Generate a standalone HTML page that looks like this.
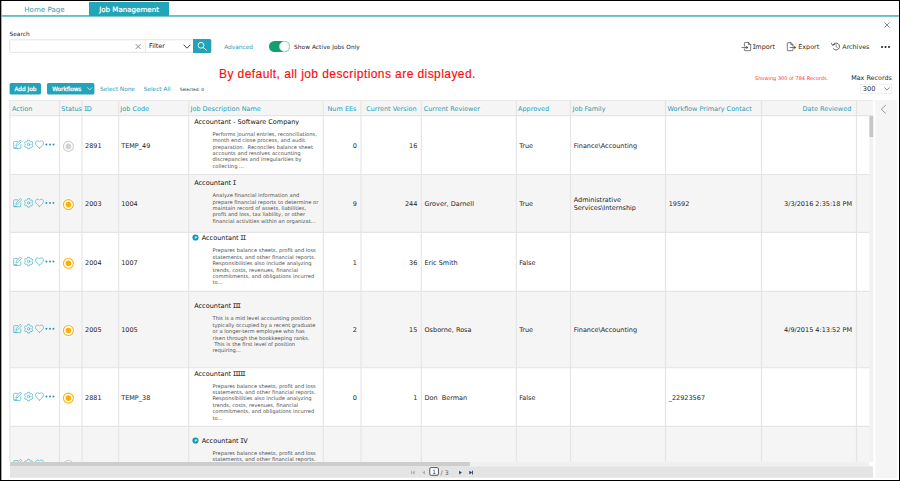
<!DOCTYPE html>
<html lang="en">
<head>
<meta charset="utf-8">
<title>Job Management</title>
<style>
*{box-sizing:border-box;margin:0;padding:0}
html,body{width:900px;height:481px;overflow:hidden;background:#fff}
body{position:relative;font-family:"DejaVu Sans","Liberation Sans",sans-serif;font-size:7.09px;color:#222;line-height:1}
.abs{position:absolute}
.t{position:absolute;white-space:nowrap;line-height:10px;height:10px}
.teal,.c.teal{color:#2a9db3}
.s{font-size:5.82px}
/* frame */
#frame{position:absolute;left:0;top:0;width:900px;height:481px;border:1px solid #000;border-left-width:1.3px;pointer-events:none;z-index:50}
#leftline{position:absolute;left:1px;top:1px;width:1px;height:479px;background:#78bcc8;z-index:40}
/* tabs */
#tabline{position:absolute;left:1px;top:15px;width:898px;height:2px;background:linear-gradient(#62bfcc 0,#62bfcc 50%,#78c8d3 50%,#78c8d3 100%)}
#tabact{position:absolute;left:89px;top:2px;width:80px;height:14px;background:#23a5b9}
/* table */
#grid{position:absolute;left:9px;top:100px;width:864px;height:362px;overflow:hidden;background:#fff}
.c{position:absolute;white-space:nowrap;line-height:10px;height:10px;color:#262626;font-size:6.5px}
.c.teal{color:#2a9db3}
.d{position:absolute;left:203.5px;font-size:5.18px;line-height:6px;height:6px;color:#505050;white-space:nowrap}
.i{font-family:'DejaVu Sans Mono','Liberation Mono',monospace;letter-spacing:-0.235em;margin-left:-0.1em;margin-right:0.12em}
.n{position:absolute;left:183px;white-space:nowrap;line-height:10px;color:#111;font-size:6.5px}
</style>
</head>
<body>
<!-- tabs -->
<div id="tabline"></div>
<div id="tabact"></div>
<div class="t teal" style="left:24.3px;top:4.8px">Home Page</div>
<div class="t" style="left:99.2px;top:4.8px;color:#fff;-webkit-text-stroke:0.2px #fff">Job Management</div>


<!-- search -->
<div class="t s" style="left:9.6px;top:29px;color:#222">Search</div>
<svg class="abs" style="left:0;top:36px" width="220" height="20" viewBox="0 36 220 20"><rect x="9.8" y="39.8" width="184" height="12.5" rx="1" fill="#fff" stroke="#e3e3e3" stroke-width="1"/><path d="M145.3 40V52" stroke="#e8e8e8" stroke-width="1"/><path d="M193 39H209.8a1.5 1.5 0 0 1 1.5 1.5V51.5a1.5 1.5 0 0 1 -1.5 1.5H193Z" fill="#22a3b7"/></svg>
<svg class="abs" style="left:135px;top:43px" width="7" height="7" viewBox="0 0 7 7"><path d="M0.7 1.1L5.6 6M5.6 1.1L0.7 6" stroke="#666" stroke-width="0.75" fill="none"/></svg>
<div class="t" style="left:149px;top:41px;color:#222;font-size:6.4px">Filter</div>
<svg class="abs" style="left:182.5px;top:43.8px" width="8" height="5" viewBox="0 0 8 5"><path d="M0.6 0.7L4 4.2L7.4 0.7" stroke="#333" stroke-width="0.9" fill="none"/></svg>
<svg class="abs" style="left:196px;top:41px" width="12" height="10" viewBox="0 0 12 10"><circle cx="5" cy="4.3" r="2.9" stroke="#fff" stroke-width="0.9" fill="none"/><path d="M7.1 6.4L10.4 9.2" stroke="#fff" stroke-width="1" stroke-linecap="round"/></svg>
<div class="t s teal" style="left:224.2px;top:41.5px">Advanced</div>
<div class="abs" style="left:269.2px;top:41.2px;width:20.5px;height:11px;border-radius:5.5px;background:#12a06c"></div>
<div class="abs" style="left:279px;top:41.1px;width:11px;height:11px;border-radius:50%;background:#fff;border:0.6px solid #cfcfcf"></div>
<div class="t s" style="left:294.1px;top:41.5px;color:#222;letter-spacing:0.06px">Show Active Jobs Only</div>

<!-- right actions -->
<svg class="abs" style="left:883.6px;top:21.9px" width="6" height="6" viewBox="0 0 6 6"><path d="M0.4 0.4L5.6 5.6M5.6 0.4L0.4 5.6" stroke="#666" stroke-width="0.75" fill="none"/></svg>
<svg class="abs" style="left:741px;top:41px" width="12" height="11" viewBox="0 0 12 11" fill="none" stroke="#444" stroke-width="0.7" stroke-linejoin="round" stroke-linecap="round"><path d="M3.4 5.2V2.1a0.7 0.7 0 0 1 0.7 -0.7H7.6L9.7 3.5V9a0.7 0.7 0 0 1 -0.7 0.7H4.1a0.7 0.7 0 0 1 -0.7 -0.7V7.8"/><path d="M7.5 1.5V3.6H9.6"/><path d="M1 6.5H6.4"/><path d="M5.3 5.2L7.2 6.5L5.3 7.8Z" fill="#444" stroke-width="0.3"/></svg>
<div class="t" style="left:752.8px;top:41.5px;color:#2a2a2a;font-size:6.5px"><span class="i">I</span>mport</div>
<svg class="abs" style="left:786px;top:41px" width="12" height="11" viewBox="0 0 12 11" fill="none" stroke="#444" stroke-width="0.7" stroke-linejoin="round" stroke-linecap="round"><path d="M6.9 7.8V9a0.7 0.7 0 0 1 -0.7 0.7H2a0.7 0.7 0 0 1 -0.7 -0.7V2.4a0.7 0.7 0 0 1 0.7 -0.7H5L6.9 3.6V5.2"/><path d="M4.9 1.8V3.7H6.8"/><path d="M4 6.5H9.2"/><path d="M8.2 5.2L10 6.5L8.2 7.8Z" fill="#444" stroke-width="0.3"/></svg>
<div class="t" style="left:798.3px;top:41.5px;color:#2a2a2a;font-size:6.4px">Export</div>
<svg class="abs" style="left:830px;top:41px" width="12" height="11" viewBox="0 0 12 11" fill="none" stroke="#333" stroke-width="0.75" stroke-linecap="round" stroke-linejoin="round"><path d="M2.9 3.9A3.5 3.5 0 1 1 3.2 7.6"/><path d="M1.3 2.2L2.6 4.3L4.8 3.4" stroke-width="0.7"/><path d="M6.1 3.6V5.6L7.3 6.5" stroke-width="0.6"/></svg>
<div class="t" style="left:842.3px;top:41.5px;color:#2a2a2a;font-size:6.35px">Archives</div>
<div class="abs" style="left:880.5px;top:45.5px;width:2.3px;height:2.3px;border-radius:50%;background:#1a1a1a;box-shadow:3.5px 0 0 #1a1a1a,7px 0 0 #1a1a1a"></div>

<!-- heading -->
<div class="abs" style="left:219px;top:66.8px;font-family:'Liberation Sans',sans-serif;font-size:12px;letter-spacing:0.425px;line-height:14px;color:#fb0d0d;-webkit-text-stroke:0.15px #fb0d0d;white-space:nowrap">By default, all job descriptions are displayed.</div>

<!-- buttons -->
<svg class="abs" style="left:0;top:80px" width="100" height="18" viewBox="0 80 100 18"><rect x="9.6" y="83" width="31.4" height="11.4" rx="1.5" fill="#22a3b7"/><rect x="47" y="83" width="47.4" height="11.4" rx="1.5" fill="#22a3b7"/><path d="M87.2 87.4L89.7 89.9L92.2 87.4" stroke="#fff" stroke-width="0.7" fill="none"/></svg>
<div class="t s" style="left:14.4px;top:83.7px;color:#fff;-webkit-text-stroke:0.25px #fff">Add Job</div>
<div class="t s" style="left:52.3px;top:83.7px;color:#fff;-webkit-text-stroke:0.25px #fff;letter-spacing:-0.08px">Workflows</div>
<div class="t s teal" style="left:100px;top:84px">Select None</div>
<div class="t s teal" style="left:143.7px;top:84px">Select All</div>
<div class="t" style="left:179.7px;top:85px;font-size:4.35px;color:#333">Selected: 0</div>

<!-- records -->
<div class="t" style="left:755px;top:73.2px;font-size:5.03px;color:#f33">Showing 300 of 784 Records.</div>
<div class="t" style="left:851.2px;top:72.7px;color:#2a2a2a;font-size:6.4px">Max Records</div>
<div class="abs" style="left:860.4px;top:83.5px;width:31.2px;height:10.8px;border:1px solid #f0f0f0;background:#fff"></div>
<div class="t" style="left:862.8px;top:83.5px;color:#2a2a2a;font-size:6.7px">300</div>
<svg class="abs" style="left:884px;top:86.5px" width="6" height="4" viewBox="0 0 6 4"><path d="M0.5 0.5L3 3.1L5.5 0.5" stroke="#555" stroke-width="0.7" fill="none"/></svg>

<!-- GRID -->
<div id="grid">
<svg class="abs" style="left:0;top:0" width="864" height="362" viewBox="9 100 864 362"><rect x="9.6" y="100.2" width="863.4" height="15.40" fill="#f5f5f5"/><rect x="9.6" y="174.5" width="863.4" height="57.80" fill="#f5f5f5"/><rect x="9.6" y="291.4" width="863.4" height="76.35" fill="#f5f5f5"/><rect x="9.6" y="426.4" width="863.4" height="77.60" fill="#f5f5f5"/><g stroke="#e5e5e5" stroke-width="1.15" fill="none"><path d="M9.6 100.2H873"/><path d="M9.6 115.6H873"/><path d="M9.6 174.5H873"/><path d="M9.6 232.3H873"/><path d="M9.6 291.4H873"/><path d="M9.6 367.75H873"/><path d="M9.6 426.4H873"/><path d="M59.5 100V462"/><path d="M82 100V462"/><path d="M118.7 100V462"/><path d="M188.7 100V462"/><path d="M323.3 100V462"/><path d="M361 100V462"/><path d="M421.3 100V462"/><path d="M516.3 100V462"/><path d="M570.5 100V462"/><path d="M665.5 100V462"/><path d="M761.5 100V462"/><path d="M856.5 100V462"/><path d="M9.9 100V462" stroke="#e6e6e6"/></g></svg>
<div class="c teal" style="left:3.0px;top:3.6px">Action</div>
<div class="c teal" style="left:52.3px;top:3.6px;width:20.3px;overflow:hidden">Status</div>
<div class="c teal" style="left:75.3px;top:3.6px"><span class="i">I</span>D</div>
<div class="c teal" style="left:111.3px;top:3.6px">Job Code</div>
<div class="c teal" style="left:181.5px;top:3.6px">Job Description Name</div>
<div class="c teal" style="left:318.5px;top:3.6px">Num EEs</div>
<div class="c teal" style="left:357.2px;top:3.6px">Current Version</div>
<div class="c teal" style="left:414.7px;top:3.6px">Current Reviewer</div>
<div class="c teal" style="left:509.0px;top:3.6px">Approved</div>
<div class="c teal" style="left:563.5px;top:3.6px">Job Family</div>
<div class="c teal" style="left:658.5px;top:3.6px">Workflow Primary Contact</div>
<div class="c teal" style="right:21.7px;top:3.6px">Date Reviewed</div>
<div class="c" style="left:76.0px;top:40.6px">2891</div>
<div class="c" style="left:112.2px;top:40.6px">TEMP_49</div>
<div class="n" style="left:185.2px;top:17.0px">Accountant - Software Company</div>
<div class="d" style="top:31px">Performs journal entries, reconciliations,</div>
<div class="d" style="top:37px">month end close process, and audit</div>
<div class="d" style="top:44px">preparation.&nbsp; Reconciles balance sheet</div>
<div class="d" style="top:50px">accounts and resolves accounting</div>
<div class="d" style="top:56px">discrepancies and irregularities by</div>
<div class="d" style="top:63px">collecting ...</div>
<div class="c" style="right:516.0px;top:40.6px">0</div>
<div class="c" style="right:455.7px;top:40.6px">16</div>
<div class="c" style="left:510.2px;top:40.6px">True</div>
<div class="c" style="left:564.7px;top:40.6px">Finance\Accounting</div>
<div class="c" style="left:76.0px;top:99.0px">2003</div>
<div class="c" style="left:112.2px;top:99.0px">1004</div>
<div class="n" style="left:185.2px;top:78.3px">Accountant <span class="i">I</span></div>
<div class="d" style="top:92px">Analyze financial information and</div>
<div class="d" style="top:99px">prepare financial reports to determine or</div>
<div class="d" style="top:105px">maintain record of assets, liabilities,</div>
<div class="d" style="top:111px">profit and loss, tax liability, or other</div>
<div class="d" style="top:118px">financial activities within an organizat...</div>
<div class="c" style="right:516.0px;top:99.0px">9</div>
<div class="c" style="right:455.7px;top:99.0px">244</div>
<div class="c" style="left:415.5px;top:99.0px">Grover, Darnell</div>
<div class="c" style="left:510.2px;top:99.0px">True</div>
<div class="c" style="left:564.7px;top:96.1px;line-height:8px;height:auto">Administrative<br>Services\Internship</div>
<div class="c" style="left:659.7px;top:99.0px">19592</div>
<div class="c" style="right:21.0px;top:99.0px">3/3/2016 2:35:18 PM</div>
<div class="c" style="left:76.0px;top:157.6px">2004</div>
<div class="c" style="left:112.2px;top:157.6px">1007</div>
<div class="n" style="left:192.7px;top:133.3px">Accountant <span class="i">II</span></div>
<div class="d" style="top:147px">Prepares balance sheets, profit and loss</div>
<div class="d" style="top:154px">statements, and other financial reports.</div>
<div class="d" style="top:160px">Responsibilities also include analyzing</div>
<div class="d" style="top:167px">trends, costs, revenues, financial</div>
<div class="d" style="top:173px">commitments, and obligations incurred</div>
<div class="d" style="top:179px">to...</div>
<div class="c" style="right:516.0px;top:157.6px">1</div>
<div class="c" style="right:455.7px;top:157.6px">36</div>
<div class="c" style="left:415.5px;top:157.6px">Eric Smith</div>
<div class="c" style="left:510.2px;top:157.6px">False</div>
<div class="c" style="left:76.0px;top:224.6px">2005</div>
<div class="c" style="left:112.2px;top:224.6px">1005</div>
<div class="n" style="left:185.2px;top:200.5px">Accountant <span class="i">III</span></div>
<div class="d" style="top:215px">This is a mid level accounting position</div>
<div class="d" style="top:222px">typically occupied by a recent graduate</div>
<div class="d" style="top:228px">or a longer-term employee who has</div>
<div class="d" style="top:235px">risen through the bookkeeping ranks.</div>
<div class="d" style="top:241px">&nbsp;This is the first level of position</div>
<div class="d" style="top:247px">requiring...</div>
<div class="c" style="right:516.0px;top:224.6px">2</div>
<div class="c" style="right:455.7px;top:224.6px">15</div>
<div class="c" style="left:415.5px;top:224.6px">Osborne, Rosa</div>
<div class="c" style="left:510.2px;top:224.6px">True</div>
<div class="c" style="left:564.7px;top:224.6px">Finance\Accounting</div>
<div class="c" style="right:21.0px;top:224.6px">4/9/2015 4:13:52 PM</div>
<div class="c" style="left:76.0px;top:293.1px">2881</div>
<div class="c" style="left:112.2px;top:293.1px">TEMP_38</div>
<div class="n" style="left:185.2px;top:268.8px">Accountant <span class="i">IIIII</span></div>
<div class="d" style="top:283px">Prepares balance sheets, profit and loss</div>
<div class="d" style="top:289px">statements, and other financial reports.</div>
<div class="d" style="top:295px">Responsibilities also include analyzing</div>
<div class="d" style="top:302px">trends, costs, revenues, financial</div>
<div class="d" style="top:308px">commitments, and obligations incurred</div>
<div class="d" style="top:315px">to...</div>
<div class="c" style="right:516.0px;top:293.1px">0</div>
<div class="c" style="right:455.7px;top:293.1px">1</div>
<div class="c" style="left:415.5px;top:293.1px">Don&nbsp; Berman</div>
<div class="c" style="left:510.2px;top:293.1px">False</div>
<div class="c" style="left:659.7px;top:293.1px">_22923567</div>
<div class="c" style="left:76.0px;top:361.6px">2882</div>
<div class="c" style="left:112.2px;top:361.6px">TEMP_39</div>
<div class="n" style="left:192.7px;top:336.3px">Accountant <span class="i">I</span>V</div>
<div class="d" style="top:350px">Prepares balance sheets, profit and loss</div>
<div class="d" style="top:356px">statements, and other financial reports.</div>
<div class="d" style="top:362px">Responsibilities also include analyzing</div>
<div class="d" style="top:369px">trends, costs, revenues, financial</div>
<div class="d" style="top:375px">commitments, and obligations incurred</div>
<div class="d" style="top:382px">to...</div>
<svg class="abs" style="left:0;top:0" width="864" height="362" viewBox="9 100 864 362"><g transform="translate(13.2,139.50)" fill="none" stroke="#3fb2c6" stroke-width="0.7" stroke-linecap="round" stroke-linejoin="round">
<path d="M7.6 5.2V8.2a0.7 0.7 0 0 1 -0.7 0.7H1.2a0.7 0.7 0 0 1 -0.7 -0.7V2.6a0.7 0.7 0 0 1 0.7 -0.7H4.4"/>
<path d="M7.4 0.8l1.1 1.1L4.2 6.2l-1.5 0.4l0.4 -1.5z"/><path d="M1 8.4h2.6" stroke-width="0.9"/>
<path d="M16.59 1.69 L16.36 0.70 L14.54 0.70 L14.31 1.69 L13.15 2.36 L12.18 2.06 L11.27 3.64 L12.01 4.33 L12.01 5.67 L11.27 6.36 L12.18 7.94 L13.15 7.64 L14.31 8.31 L14.54 9.30 L16.36 9.30 L16.59 8.31 L17.75 7.64 L18.72 7.94 L19.63 6.36 L18.89 5.67 L18.89 4.33 L19.63 3.64 L18.72 2.06 L17.75 2.36 Z"/>
<circle cx="15.45" cy="5" r="1.25"/>
<path d="M26.3 8.6 C24.6 7.2 22.3 5.6 22.3 3.5 C22.3 2.2 23.3 1.3 24.4 1.3 C25.2 1.3 25.9 1.7 26.3 2.4 C26.7 1.7 27.4 1.3 28.2 1.3 C29.3 1.3 30.3 2.2 30.3 3.5 C30.3 5.6 28 7.2 26.3 8.6 Z"/>
<g fill="#1793aa" stroke="none"><circle cx="33.2" cy="5" r="0.95"/><circle cx="36.8" cy="5" r="0.95"/><circle cx="40.3" cy="5" r="0.95"/></g>
</g><circle cx="68.4" cy="146.4" r="6.3" fill="#fff" opacity="0.7"/><circle cx="68.4" cy="146.4" r="5" fill="#fff" stroke="#cfcfcf" stroke-width="1.1"/><circle cx="68.4" cy="146.4" r="2.8" fill="#d2d2d2"/><g transform="translate(13.2,197.90)" fill="none" stroke="#3fb2c6" stroke-width="0.7" stroke-linecap="round" stroke-linejoin="round">
<path d="M7.6 5.2V8.2a0.7 0.7 0 0 1 -0.7 0.7H1.2a0.7 0.7 0 0 1 -0.7 -0.7V2.6a0.7 0.7 0 0 1 0.7 -0.7H4.4"/>
<path d="M7.4 0.8l1.1 1.1L4.2 6.2l-1.5 0.4l0.4 -1.5z"/><path d="M1 8.4h2.6" stroke-width="0.9"/>
<path d="M16.59 1.69 L16.36 0.70 L14.54 0.70 L14.31 1.69 L13.15 2.36 L12.18 2.06 L11.27 3.64 L12.01 4.33 L12.01 5.67 L11.27 6.36 L12.18 7.94 L13.15 7.64 L14.31 8.31 L14.54 9.30 L16.36 9.30 L16.59 8.31 L17.75 7.64 L18.72 7.94 L19.63 6.36 L18.89 5.67 L18.89 4.33 L19.63 3.64 L18.72 2.06 L17.75 2.36 Z"/>
<circle cx="15.45" cy="5" r="1.25"/>
<path d="M26.3 8.6 C24.6 7.2 22.3 5.6 22.3 3.5 C22.3 2.2 23.3 1.3 24.4 1.3 C25.2 1.3 25.9 1.7 26.3 2.4 C26.7 1.7 27.4 1.3 28.2 1.3 C29.3 1.3 30.3 2.2 30.3 3.5 C30.3 5.6 28 7.2 26.3 8.6 Z"/>
<g fill="#1793aa" stroke="none"><circle cx="33.2" cy="5" r="0.95"/><circle cx="36.8" cy="5" r="0.95"/><circle cx="40.3" cy="5" r="0.95"/></g>
</g><circle cx="68.4" cy="204.6" r="6.3" fill="#fff" opacity="0.7"/><circle cx="68.4" cy="204.6" r="5" fill="#fff" stroke="#fdb414" stroke-width="1.1"/><circle cx="68.4" cy="204.6" r="2.8" fill="#fdb000"/><g transform="translate(13.2,256.50)" fill="none" stroke="#3fb2c6" stroke-width="0.7" stroke-linecap="round" stroke-linejoin="round">
<path d="M7.6 5.2V8.2a0.7 0.7 0 0 1 -0.7 0.7H1.2a0.7 0.7 0 0 1 -0.7 -0.7V2.6a0.7 0.7 0 0 1 0.7 -0.7H4.4"/>
<path d="M7.4 0.8l1.1 1.1L4.2 6.2l-1.5 0.4l0.4 -1.5z"/><path d="M1 8.4h2.6" stroke-width="0.9"/>
<path d="M16.59 1.69 L16.36 0.70 L14.54 0.70 L14.31 1.69 L13.15 2.36 L12.18 2.06 L11.27 3.64 L12.01 4.33 L12.01 5.67 L11.27 6.36 L12.18 7.94 L13.15 7.64 L14.31 8.31 L14.54 9.30 L16.36 9.30 L16.59 8.31 L17.75 7.64 L18.72 7.94 L19.63 6.36 L18.89 5.67 L18.89 4.33 L19.63 3.64 L18.72 2.06 L17.75 2.36 Z"/>
<circle cx="15.45" cy="5" r="1.25"/>
<path d="M26.3 8.6 C24.6 7.2 22.3 5.6 22.3 3.5 C22.3 2.2 23.3 1.3 24.4 1.3 C25.2 1.3 25.9 1.7 26.3 2.4 C26.7 1.7 27.4 1.3 28.2 1.3 C29.3 1.3 30.3 2.2 30.3 3.5 C30.3 5.6 28 7.2 26.3 8.6 Z"/>
<g fill="#1793aa" stroke="none"><circle cx="33.2" cy="5" r="0.95"/><circle cx="36.8" cy="5" r="0.95"/><circle cx="40.3" cy="5" r="0.95"/></g>
</g><circle cx="68.4" cy="263.3" r="6.3" fill="#fff" opacity="0.7"/><circle cx="68.4" cy="263.3" r="5" fill="#fff" stroke="#fdb414" stroke-width="1.1"/><circle cx="68.4" cy="263.3" r="2.8" fill="#fdb000"/><circle cx="195.5" cy="237.5" r="3.1" fill="#1798b0"/><text x="195.7" y="238.8" font-size="3.6" font-weight="bold" fill="#d8f0f4" text-anchor="middle" font-family="DejaVu Sans, Liberation Sans, sans-serif">P</text><g transform="translate(13.2,323.75)" fill="none" stroke="#3fb2c6" stroke-width="0.7" stroke-linecap="round" stroke-linejoin="round">
<path d="M7.6 5.2V8.2a0.7 0.7 0 0 1 -0.7 0.7H1.2a0.7 0.7 0 0 1 -0.7 -0.7V2.6a0.7 0.7 0 0 1 0.7 -0.7H4.4"/>
<path d="M7.4 0.8l1.1 1.1L4.2 6.2l-1.5 0.4l0.4 -1.5z"/><path d="M1 8.4h2.6" stroke-width="0.9"/>
<path d="M16.59 1.69 L16.36 0.70 L14.54 0.70 L14.31 1.69 L13.15 2.36 L12.18 2.06 L11.27 3.64 L12.01 4.33 L12.01 5.67 L11.27 6.36 L12.18 7.94 L13.15 7.64 L14.31 8.31 L14.54 9.30 L16.36 9.30 L16.59 8.31 L17.75 7.64 L18.72 7.94 L19.63 6.36 L18.89 5.67 L18.89 4.33 L19.63 3.64 L18.72 2.06 L17.75 2.36 Z"/>
<circle cx="15.45" cy="5" r="1.25"/>
<path d="M26.3 8.6 C24.6 7.2 22.3 5.6 22.3 3.5 C22.3 2.2 23.3 1.3 24.4 1.3 C25.2 1.3 25.9 1.7 26.3 2.4 C26.7 1.7 27.4 1.3 28.2 1.3 C29.3 1.3 30.3 2.2 30.3 3.5 C30.3 5.6 28 7.2 26.3 8.6 Z"/>
<g fill="#1793aa" stroke="none"><circle cx="33.2" cy="5" r="0.95"/><circle cx="36.8" cy="5" r="0.95"/><circle cx="40.3" cy="5" r="0.95"/></g>
</g><circle cx="68.4" cy="330.5" r="6.3" fill="#fff" opacity="0.7"/><circle cx="68.4" cy="330.5" r="5" fill="#fff" stroke="#fdb414" stroke-width="1.1"/><circle cx="68.4" cy="330.5" r="2.8" fill="#fdb000"/><g transform="translate(13.2,391.50)" fill="none" stroke="#3fb2c6" stroke-width="0.7" stroke-linecap="round" stroke-linejoin="round">
<path d="M7.6 5.2V8.2a0.7 0.7 0 0 1 -0.7 0.7H1.2a0.7 0.7 0 0 1 -0.7 -0.7V2.6a0.7 0.7 0 0 1 0.7 -0.7H4.4"/>
<path d="M7.4 0.8l1.1 1.1L4.2 6.2l-1.5 0.4l0.4 -1.5z"/><path d="M1 8.4h2.6" stroke-width="0.9"/>
<path d="M16.59 1.69 L16.36 0.70 L14.54 0.70 L14.31 1.69 L13.15 2.36 L12.18 2.06 L11.27 3.64 L12.01 4.33 L12.01 5.67 L11.27 6.36 L12.18 7.94 L13.15 7.64 L14.31 8.31 L14.54 9.30 L16.36 9.30 L16.59 8.31 L17.75 7.64 L18.72 7.94 L19.63 6.36 L18.89 5.67 L18.89 4.33 L19.63 3.64 L18.72 2.06 L17.75 2.36 Z"/>
<circle cx="15.45" cy="5" r="1.25"/>
<path d="M26.3 8.6 C24.6 7.2 22.3 5.6 22.3 3.5 C22.3 2.2 23.3 1.3 24.4 1.3 C25.2 1.3 25.9 1.7 26.3 2.4 C26.7 1.7 27.4 1.3 28.2 1.3 C29.3 1.3 30.3 2.2 30.3 3.5 C30.3 5.6 28 7.2 26.3 8.6 Z"/>
<g fill="#1793aa" stroke="none"><circle cx="33.2" cy="5" r="0.95"/><circle cx="36.8" cy="5" r="0.95"/><circle cx="40.3" cy="5" r="0.95"/></g>
</g><circle cx="68.4" cy="398.1" r="6.3" fill="#fff" opacity="0.7"/><circle cx="68.4" cy="398.1" r="5" fill="#fff" stroke="#fdb414" stroke-width="1.1"/><circle cx="68.4" cy="398.1" r="2.8" fill="#fdb000"/><g transform="translate(13.2,458.70)" fill="none" stroke="#3fb2c6" stroke-width="0.7" stroke-linecap="round" stroke-linejoin="round">
<path d="M7.6 5.2V8.2a0.7 0.7 0 0 1 -0.7 0.7H1.2a0.7 0.7 0 0 1 -0.7 -0.7V2.6a0.7 0.7 0 0 1 0.7 -0.7H4.4"/>
<path d="M7.4 0.8l1.1 1.1L4.2 6.2l-1.5 0.4l0.4 -1.5z"/><path d="M1 8.4h2.6" stroke-width="0.9"/>
<path d="M16.59 1.69 L16.36 0.70 L14.54 0.70 L14.31 1.69 L13.15 2.36 L12.18 2.06 L11.27 3.64 L12.01 4.33 L12.01 5.67 L11.27 6.36 L12.18 7.94 L13.15 7.64 L14.31 8.31 L14.54 9.30 L16.36 9.30 L16.59 8.31 L17.75 7.64 L18.72 7.94 L19.63 6.36 L18.89 5.67 L18.89 4.33 L19.63 3.64 L18.72 2.06 L17.75 2.36 Z"/>
<circle cx="15.45" cy="5" r="1.25"/>
<path d="M26.3 8.6 C24.6 7.2 22.3 5.6 22.3 3.5 C22.3 2.2 23.3 1.3 24.4 1.3 C25.2 1.3 25.9 1.7 26.3 2.4 C26.7 1.7 27.4 1.3 28.2 1.3 C29.3 1.3 30.3 2.2 30.3 3.5 C30.3 5.6 28 7.2 26.3 8.6 Z"/>
<g fill="#1793aa" stroke="none"><circle cx="33.2" cy="5" r="0.95"/><circle cx="36.8" cy="5" r="0.95"/><circle cx="40.3" cy="5" r="0.95"/></g>
</g><circle cx="68.4" cy="465.4" r="6.3" fill="#fff" opacity="0.7"/><circle cx="68.4" cy="465.4" r="5" fill="#fff" stroke="#cfcfcf" stroke-width="1.1"/><circle cx="68.4" cy="465.4" r="2.8" fill="#d2d2d2"/><circle cx="195.5" cy="440.5" r="3.1" fill="#1798b0"/><text x="195.7" y="441.8" font-size="3.6" font-weight="bold" fill="#d8f0f4" text-anchor="middle" font-family="DejaVu Sans, Liberation Sans, sans-serif">P</text></svg>
</div>
<svg class="abs" style="left:0;top:95px" width="900" height="386" viewBox="0 95 900 386">
<rect x="869.4" y="116" width="3.8" height="346" fill="#f1f1f1"/>
<rect x="869.4" y="116" width="3.8" height="21" fill="#c6c6c6"/>
<rect x="875.4" y="100" width="21.6" height="378" fill="#f5f5f5"/>
<path d="M885.9 105L881.3 109.3L885.9 113.6" stroke="#777" stroke-width="0.75" fill="none"/>
<rect x="10" y="462" width="859.4" height="4.4" fill="#f0f0f0"/><rect x="869.4" y="462" width="4" height="4.4" fill="#fff"/>
<rect x="10" y="462" width="459.8" height="4.4" fill="#cdcdcd"/>
<rect x="10" y="466.3" width="863" height="11.4" fill="#e4e4e4"/>
<g fill="#9fadc6"><rect x="411.1" y="470.7" width="0.8" height="3.8"/><path d="M414.7 470.7V474.5L412.2 472.6Z"/><path d="M425 470.7V474.5L422.3 472.6Z"/></g>
<g fill="#24346d"><path d="M459.2 470.7V474.5L461.8 472.6Z"/><path d="M469.4 470.7V474.5L472 472.6Z"/><rect x="472.1" y="470.7" width="0.85" height="3.8"/></g>
<rect x="429.8" y="467.6" width="8.6" height="7.7" rx="1.3" fill="#fff" stroke="#444" stroke-width="0.9"/>
</svg>
<div class="t" style="left:432.2px;top:466.9px;font-size:5.8px;color:#333">1</div>
<div class="t" style="left:440.6px;top:467.6px;font-size:6.2px;color:#555">/ 3</div>
<!-- /GRID -->

<div id="leftline"></div>
<div id="frame"></div>
</body>
</html>
